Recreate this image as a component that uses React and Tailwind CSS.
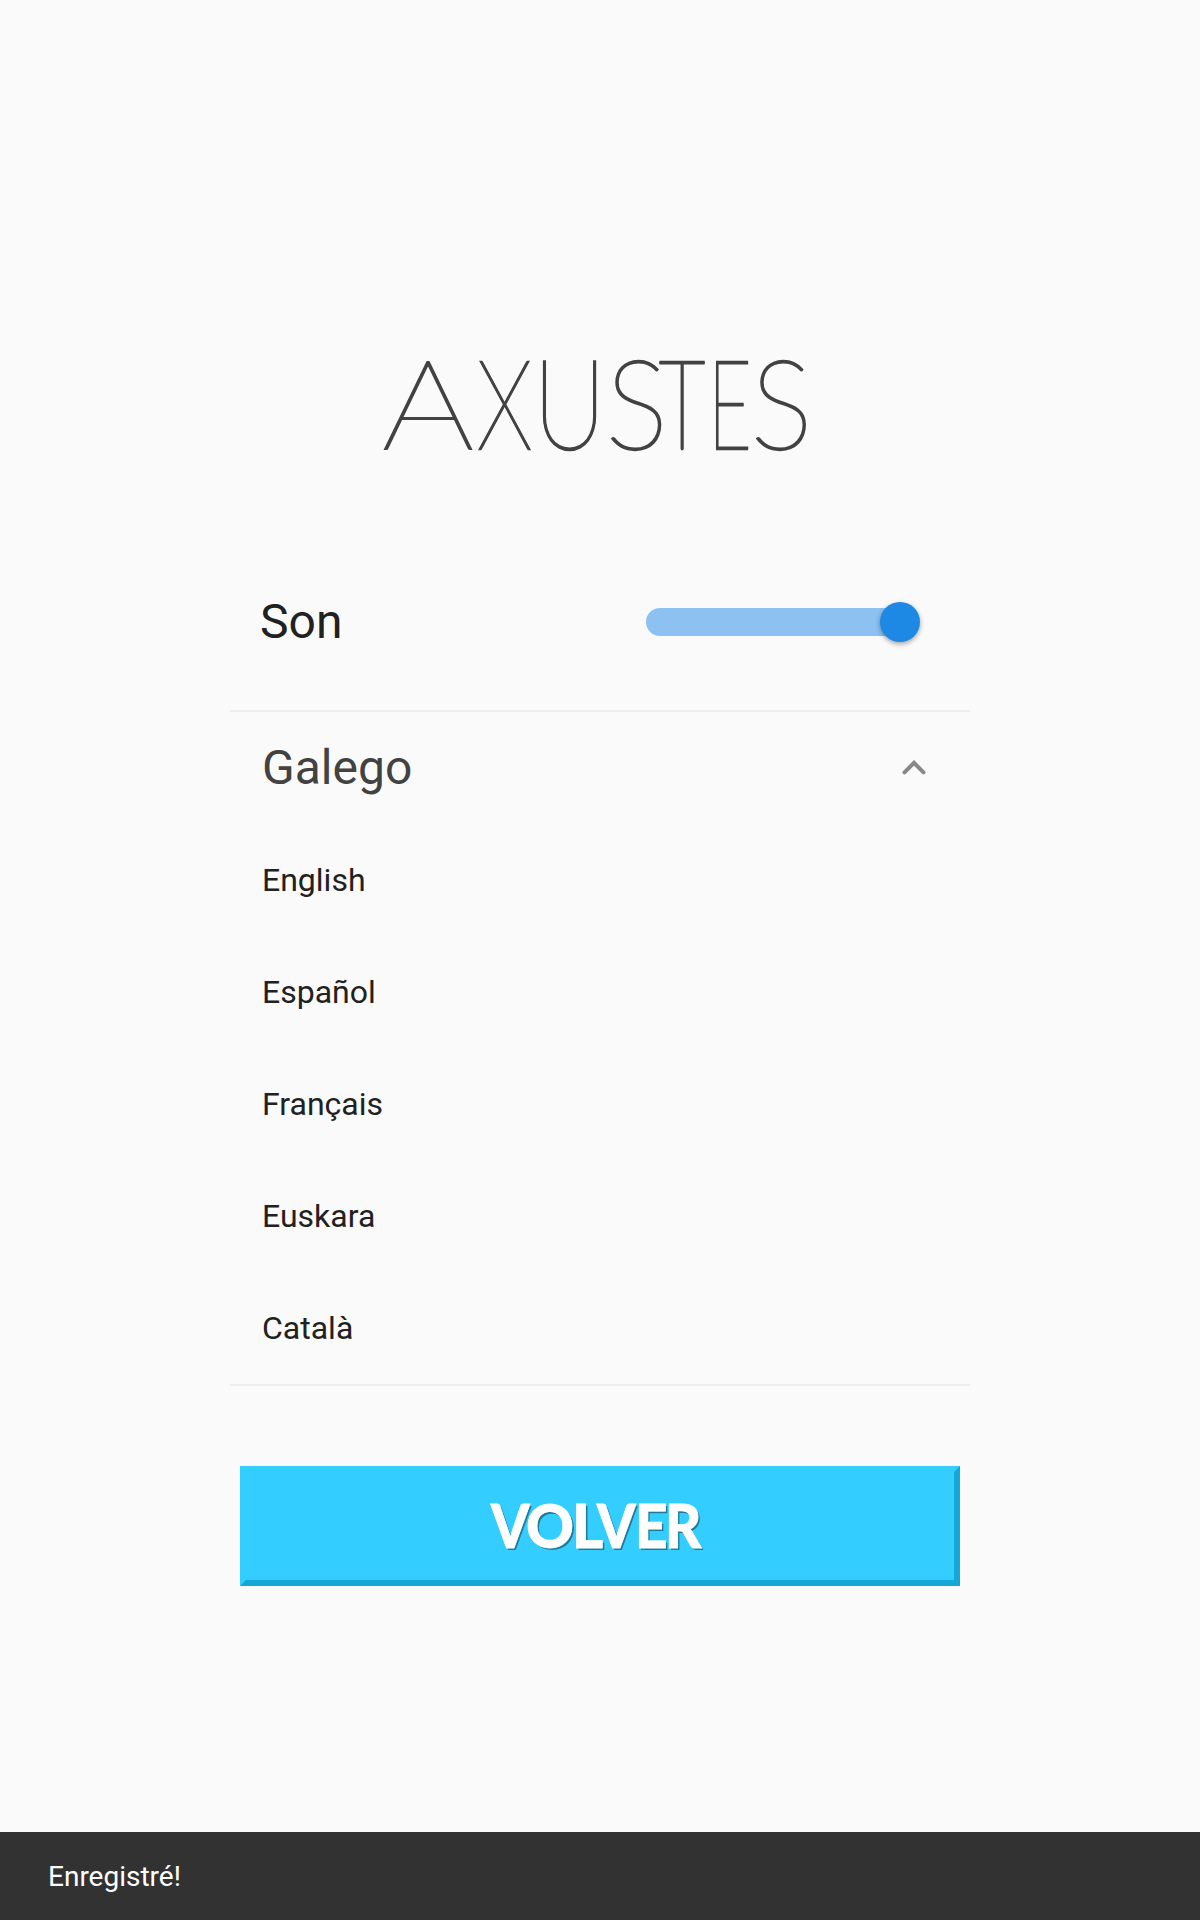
const languages = ["English", "Español", "Français", "Euskara", "Català"];

// Display lettering: each letter has its own pitch and horizontal proportion.
const title = [
  ["A", "w-[95.2px] scale-x-[1.166] [-webkit-text-stroke:1.8px_#424242]"],
  ["X", "w-[56.5px] scale-x-[0.74] [text-shadow:0.8px_0_#424242,-0.8px_0_#424242]"],
  ["U", "w-[72.4px] scale-x-[0.818] [text-shadow:0.7px_0_#424242,-0.7px_0_#424242]"],
  ["S", "w-[53.7px] scale-x-[0.94] [text-shadow:0.3px_0_#424242,-0.3px_0_#424242]"],
  ["T", "w-[48.8px] scale-x-[0.653] [text-shadow:1.4px_0_#424242,-1.4px_0_#424242]"],
  ["E", "w-[43.2px] scale-x-[0.605] [text-shadow:1.4px_0_#424242,-1.4px_0_#424242]"],
  ["S", "w-[60px] scale-x-[0.935] [text-shadow:0.3px_0_#424242,-0.3px_0_#424242]"],
];

const back = [
  ["V", "w-[35px] scale-x-[0.9]"],
  ["O", "w-[46px] scale-x-[0.97]"],
  ["L", "w-[24.5px] scale-x-[0.98]"],
  ["V", "w-[38.5px] scale-x-[0.9]"],
  ["E", "w-[30.3px] scale-x-[0.93]"],
  ["R", "w-[37px] scale-x-[0.92]"],
];

function Lettering({ letters }) {
  return letters.map(([ch, shape], i) => (
    <span key={i} className={`inline-block origin-left text-left ${shape}`}>{ch}</span>
  ));
}

export default function App() {
  return (
    <div className="flex h-[1920px] w-[1200px] flex-col overflow-hidden bg-[#fafafa] font-['Roboto',sans-serif] text-[#212121]">
      <main className="flex flex-1 flex-col items-center">
        <h1 className="mt-[321px] mb-px h-[160px] w-full pl-[381.5px] font-['Lato',sans-serif] text-[124px] leading-[160px] font-thin whitespace-nowrap text-[#424242] [-webkit-text-stroke:2.3px_#424242]">
          <Lettering letters={title} />
        </h1>
        <section className="flex h-[230px] w-[740px] items-center justify-between border-b-2 border-[#eeeeee] pt-[52px] pr-[50px] pl-[30px]">
          <span className="text-[48px] leading-[56px]">Son</span>
          <div role="switch" aria-checked="true" aria-label="Son" className="flex w-[274px] items-center">
            <div className="h-7 w-[254px] rounded-l-full bg-[#8dc1f1]" />
            <div className="-ml-5 size-10 shrink-0 rounded-full bg-[#1e88e5] shadow-[0_2px_5px_rgba(0,0,0,0.35)]" />
          </div>
        </section>
        <section className="w-[740px] border-b-2 border-[#eeeeee] px-8">
          <div className="flex h-[112px] items-center justify-between text-[48px] text-[#424242]">
            Galego
            <svg className="mr-3 h-4 w-6" viewBox="0 0 24 16" fill="none" stroke="#888888" strokeWidth="4" strokeLinecap="round">
              <path d="M2.5 12.3 12 2.8l9.5 9.5" />
            </svg>
          </div>
          <ul>
            {languages.map((name) => (
              <li key={name} className="flex h-[112px] items-center text-[32px]">{name}</li>
            ))}
          </ul>
        </section>
        <button className="mt-20 h-[120px] w-[720px] border-6 border-t-[#33ceff] border-r-[#16a7d7] border-b-[#16a7d7] border-l-[#33ceff] bg-[#33ceff] pb-[3px] pl-[245px] text-left font-['Lato',sans-serif] text-[61px] leading-[60px] font-black whitespace-nowrap text-white [-webkit-text-stroke:0.8px_white] [text-shadow:2px_2px_0_rgba(0,0,0,0.4)]">
          <Lettering letters={back} />
        </button>
      </main>
      <footer className="flex h-[88px] items-center bg-[#323232] pt-0.5 pl-12 text-[28px] text-white">Enregistré!</footer>
    </div>
  );
}
